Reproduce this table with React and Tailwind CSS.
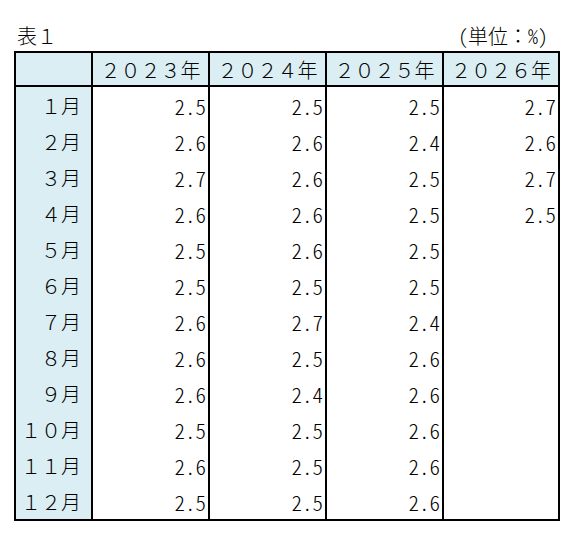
import React from "react";

const rows = [
  ["１月", "2.5", "2.5", "2.5", "2.7"],
  ["２月", "2.6", "2.6", "2.4", "2.6"],
  ["３月", "2.7", "2.6", "2.5", "2.7"],
  ["４月", "2.6", "2.6", "2.5", "2.5"],
  ["５月", "2.5", "2.6", "2.5", ""],
  ["６月", "2.5", "2.5", "2.5", ""],
  ["７月", "2.6", "2.7", "2.4", ""],
  ["８月", "2.6", "2.5", "2.6", ""],
  ["９月", "2.6", "2.4", "2.6", ""],
  ["１０月", "2.5", "2.5", "2.6", ""],
  ["１１月", "2.6", "2.5", "2.6", ""],
  ["１２月", "2.5", "2.5", "2.6", ""],
];

const years = ["２０２３年", "２０２４年", "２０２５年", "２０２６年"];
const widths = ["w-[117px]", "w-[117px]", "w-[117px]", "flex-1"];

export default function App() {
  return (
    <div className="w-[575px] h-[535px] bg-white text-black font-['Noto_Sans_CJK_JP',sans-serif] text-[20px] font-light">
      <div className="w-[546px] ml-[14px] h-[51px] flex items-end justify-between pb-[5px] leading-none">
        <span className="pl-[3px]">表１</span>
        <span className="pr-[12px] text-[20px]">
          <span className="[font-feature-settings:'hwid']">(</span>単位：<span className="[font-feature-settings:'hwid']">%)</span>
        </span>
      </div>
      <div className="w-[546px] ml-[14px] border-2 border-black flex flex-col leading-none">
        <div className="flex h-[34px] border-b-2 border-black bg-[#daeef3]">
          <div className="w-[75px]" />
          {years.map((y, i) => (
            <div key={y} className={`${widths[i]} border-l-2 border-black flex items-center justify-center pt-[2px]`}>
              {y}
            </div>
          ))}
        </div>
        {rows.map((r) => (
          <div key={r[0]} className="flex h-[36px]">
            <div className="w-[75px] bg-[#daeef3] flex items-center justify-end pr-[10px] pt-[2px]">{r[0]}</div>
            {r.slice(1).map((v, i) => (
              <div key={i} className={`${widths[i]} border-l-2 border-black flex items-center justify-end pr-[2px] pt-[2px] text-[21px] [font-feature-settings:'hwid']`}>
                {v}
              </div>
            ))}
          </div>
        ))}
      </div>
    </div>
  );
}
